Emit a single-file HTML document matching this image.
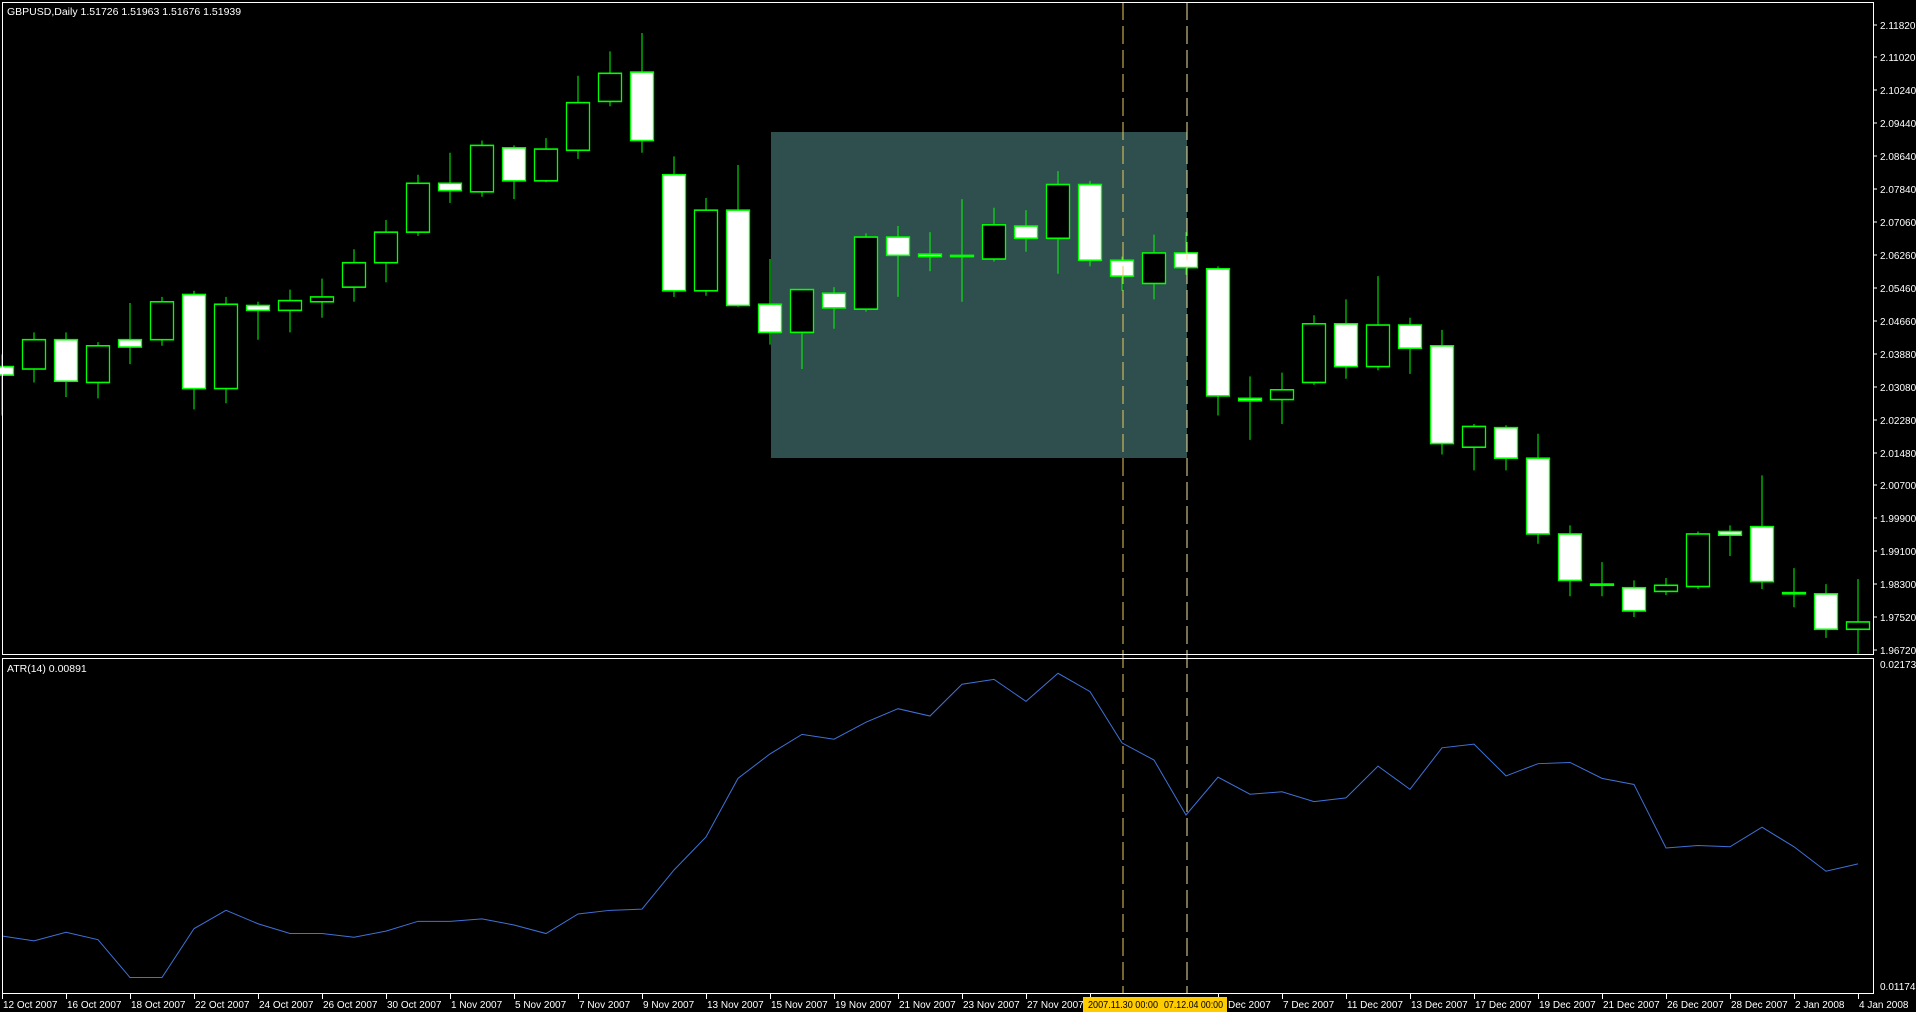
<!DOCTYPE html>
<html><head><meta charset="utf-8"><style>
html,body{margin:0;padding:0;background:#000;width:1916px;height:1012px;overflow:hidden}
svg{display:block}
text{font-family:"Liberation Sans",sans-serif;font-size:10.5px;fill:#fff}
.p text{font-size:10px}
.w{stroke:#00ff00;stroke-width:1;vector-effect:non-scaling-stroke}
.b{stroke:#00ff00;stroke-width:1.3;vector-effect:non-scaling-stroke}
</style></head><body>
<svg width="1916" height="1012" viewBox="0 0 1916 1012">
<rect width="1916" height="1012" fill="#000"/>
<rect x="771" y="132" width="416" height="326" fill="#2f4f4f"/>
<g transform="scale(1,1.2219)">
<g class="w">
<line x1="2" x2="2" y1="290" y2="340"/><line x1="34" x2="34" y1="272" y2="313"/><line x1="66" x2="66" y1="272" y2="325"/><line x1="98" x2="98" y1="280" y2="326"/><line x1="130" x2="130" y1="248" y2="298"/><line x1="162" x2="162" y1="243" y2="283"/><line x1="194" x2="194" y1="238" y2="335"/><line x1="226" x2="226" y1="243" y2="330"/><line x1="258" x2="258" y1="247" y2="278"/><line x1="290" x2="290" y1="237" y2="272"/><line x1="322" x2="322" y1="228" y2="260"/><line x1="354" x2="354" y1="204" y2="247"/><line x1="386" x2="386" y1="180" y2="231"/><line x1="418" x2="418" y1="143" y2="193"/><line x1="450" x2="450" y1="125" y2="166"/><line x1="482" x2="482" y1="115" y2="161"/><line x1="514" x2="514" y1="119" y2="163"/><line x1="546" x2="546" y1="113" y2="149"/><line x1="578" x2="578" y1="62" y2="130"/><line x1="610" x2="610" y1="42" y2="87"/><line x1="642" x2="642" y1="27" y2="125"/><line x1="674" x2="674" y1="128" y2="243"/><line x1="706" x2="706" y1="162" y2="242"/><line x1="738" x2="738" y1="135" y2="251"/><line x1="770" x2="770" y1="212" y2="282"/><line x1="802" x2="802" y1="237" y2="302"/><line x1="834" x2="834" y1="235" y2="269"/><line x1="866" x2="866" y1="191" y2="255"/><line x1="898" x2="898" y1="185" y2="243"/><line x1="930" x2="930" y1="190" y2="222"/><line x1="962" x2="962" y1="163" y2="247"/><line x1="994" x2="994" y1="170" y2="214"/><line x1="1026" x2="1026" y1="172" y2="206"/><line x1="1058" x2="1058" y1="140" y2="224"/><line x1="1090" x2="1090" y1="148" y2="218"/><line x1="1122" x2="1122" y1="210" y2="238"/><line x1="1154" x2="1154" y1="192" y2="245"/><line x1="1186" x2="1186" y1="190" y2="225"/><line x1="1218" x2="1218" y1="218" y2="340"/><line x1="1250" x2="1250" y1="308" y2="360"/><line x1="1282" x2="1282" y1="305" y2="347"/><line x1="1314" x2="1314" y1="258" y2="315"/><line x1="1346" x2="1346" y1="245" y2="310"/><line x1="1378" x2="1378" y1="226" y2="303"/><line x1="1410" x2="1410" y1="260" y2="306"/><line x1="1442" x2="1442" y1="270" y2="372"/><line x1="1474" x2="1474" y1="347" y2="385"/><line x1="1506" x2="1506" y1="348" y2="385"/><line x1="1538" x2="1538" y1="355" y2="445"/><line x1="1570" x2="1570" y1="430" y2="488"/><line x1="1602" x2="1602" y1="460" y2="488"/><line x1="1634" x2="1634" y1="475" y2="505"/><line x1="1666" x2="1666" y1="473" y2="487"/><line x1="1698" x2="1698" y1="435" y2="482"/><line x1="1730" x2="1730" y1="430" y2="455"/><line x1="1762" x2="1762" y1="389" y2="482"/><line x1="1794" x2="1794" y1="465" y2="497"/><line x1="1826" x2="1826" y1="478" y2="522"/><line x1="1858" x2="1858" y1="474" y2="535"/>
</g>
<g class="b">
<rect x="-9.5" y="300" width="23" height="7" fill="#fff"/>
<rect x="22.5" y="278" width="23" height="24" fill="#000"/>
<rect x="54.5" y="278" width="23" height="34" fill="#fff"/>
<rect x="86.5" y="283" width="23" height="30" fill="#000"/>
<rect x="118.5" y="278" width="23" height="6" fill="#fff"/>
<rect x="150.5" y="247" width="23" height="31" fill="#000"/>
<rect x="182.5" y="241" width="23" height="77" fill="#fff"/>
<rect x="214.5" y="249" width="23" height="69" fill="#000"/>
<rect x="246.5" y="250" width="23" height="4" fill="#fff"/>
<rect x="278.5" y="246" width="23" height="8" fill="#000"/>
<rect x="310.5" y="243" width="23" height="4" fill="#000"/>
<rect x="342.5" y="215" width="23" height="20" fill="#000"/>
<rect x="374.5" y="190" width="23" height="25" fill="#000"/>
<rect x="406.5" y="150" width="23" height="40" fill="#000"/>
<rect x="438.5" y="150" width="23" height="6" fill="#fff"/>
<rect x="470.5" y="119" width="23" height="38" fill="#000"/>
<rect x="502.5" y="121" width="23" height="27" fill="#fff"/>
<rect x="534.5" y="122" width="23" height="26" fill="#000"/>
<rect x="566.5" y="84" width="23" height="39" fill="#000"/>
<rect x="598.5" y="60" width="23" height="23" fill="#000"/>
<rect x="630.5" y="59" width="23" height="56" fill="#fff"/>
<rect x="662.5" y="143" width="23" height="95" fill="#fff"/>
<rect x="694.5" y="172" width="23" height="66" fill="#000"/>
<rect x="726.5" y="172" width="23" height="78" fill="#fff"/>
<rect x="758.5" y="249" width="23" height="23" fill="#fff"/>
<rect x="790.5" y="237" width="23" height="35" fill="#000"/>
<rect x="822.5" y="240" width="23" height="12" fill="#fff"/>
<rect x="854.5" y="194" width="23" height="59" fill="#000"/>
<rect x="886.5" y="194" width="23" height="15" fill="#fff"/>
<rect x="918.5" y="208" width="23" height="2" fill="#fff"/>
<rect x="950.5" y="209" width="23" height="1" fill="#fff"/>
<rect x="982.5" y="184" width="23" height="28" fill="#000"/>
<rect x="1014.5" y="185" width="23" height="10" fill="#fff"/>
<rect x="1046.5" y="151" width="23" height="44" fill="#000"/>
<rect x="1078.5" y="151" width="23" height="62" fill="#fff"/>
<rect x="1110.5" y="213" width="23" height="13" fill="#fff"/>
<rect x="1142.5" y="207" width="23" height="25" fill="#000"/>
<rect x="1174.5" y="207" width="23" height="12" fill="#fff"/>
<rect x="1206.5" y="220" width="23" height="104" fill="#fff"/>
<rect x="1238.5" y="326" width="23" height="2" fill="#fff"/>
<rect x="1270.5" y="319" width="23" height="8" fill="#000"/>
<rect x="1302.5" y="265" width="23" height="48" fill="#000"/>
<rect x="1334.5" y="265" width="23" height="35" fill="#fff"/>
<rect x="1366.5" y="266" width="23" height="34" fill="#000"/>
<rect x="1398.5" y="266" width="23" height="19" fill="#fff"/>
<rect x="1430.5" y="283" width="23" height="80" fill="#fff"/>
<rect x="1462.5" y="349" width="23" height="17" fill="#000"/>
<rect x="1494.5" y="350" width="23" height="25" fill="#fff"/>
<rect x="1526.5" y="375" width="23" height="62" fill="#fff"/>
<rect x="1558.5" y="437" width="23" height="38" fill="#fff"/>
<rect x="1590.5" y="478" width="23" height="1" fill="#fff"/>
<rect x="1622.5" y="481" width="23" height="19" fill="#fff"/>
<rect x="1654.5" y="479" width="23" height="5" fill="#000"/>
<rect x="1686.5" y="437" width="23" height="43" fill="#000"/>
<rect x="1718.5" y="435" width="23" height="3" fill="#fff"/>
<rect x="1750.5" y="431" width="23" height="45" fill="#fff"/>
<rect x="1782.5" y="485" width="23" height="1" fill="#fff"/>
<rect x="1814.5" y="486" width="23" height="29" fill="#fff"/>
<rect x="1846.5" y="509" width="23" height="6" fill="#000"/>
</g>
<polyline fill="none" stroke="#3f72d8" stroke-width="1" vector-effect="non-scaling-stroke" points="2,766 34,770 66,763 98,769 130,800 162,800 194,760 226,745 258,756 290,764 322,764 354,767 386,762 418,754 450,754 482,752 514,757 546,764 578,748 610,745 642,744 674,712 706,685 738,637 770,617 802,601 834,605 866,591 898,580 930,586 962,560 994,556 1026,574 1058,551 1090,566 1122,608 1154,622 1186,667 1218,636 1250,650 1282,648 1314,656 1346,653 1378,627 1410,646 1442,612 1474,609 1506,635 1538,625 1570,624 1602,637 1634,642 1666,694 1698,692 1730,693 1762,677 1794,693 1826,713 1858,707"/>
</g>
<line x1="1123" x2="1123" y1="2" y2="994" stroke="#e8c860" stroke-width="1" stroke-dasharray="18,6"/>
<line x1="1187" x2="1187" y1="2" y2="994" stroke="#f0e0a0" stroke-width="1" stroke-dasharray="18,6"/>
<g fill="none" stroke="#fff" stroke-width="1">
<rect x="2.5" y="2.5" width="1871" height="652"/>
<rect x="2.5" y="658.5" width="1871" height="335"/>
</g>
<text x="7" y="15">GBPUSD,Daily  1.51726 1.51963 1.51676 1.51939</text>
<text x="7" y="672">ATR(14) 0.00891</text>
<g class="p">
<text x="1880" y="29">2.11820</text><text x="1880" y="61">2.11020</text><text x="1880" y="94">2.10240</text><text x="1880" y="127">2.09440</text><text x="1880" y="160">2.08640</text><text x="1880" y="193">2.07840</text><text x="1880" y="226">2.07060</text><text x="1880" y="259">2.06260</text><text x="1880" y="292">2.05460</text><text x="1880" y="325">2.04660</text><text x="1880" y="358">2.03880</text><text x="1880" y="391">2.03080</text><text x="1880" y="424">2.02280</text><text x="1880" y="457">2.01480</text><text x="1880" y="489">2.00700</text><text x="1880" y="522">1.99900</text><text x="1880" y="555">1.99100</text><text x="1880" y="588">1.98300</text><text x="1880" y="621">1.97520</text><text x="1880" y="654">1.96720</text>
<text x="1880" y="668">0.02173</text><text x="1880" y="990">0.01174</text>
</g>
<g stroke="#fff"><line x1="1874" x2="1877" y1="25" y2="25"/><line x1="1874" x2="1877" y1="57" y2="57"/><line x1="1874" x2="1877" y1="90" y2="90"/><line x1="1874" x2="1877" y1="123" y2="123"/><line x1="1874" x2="1877" y1="156" y2="156"/><line x1="1874" x2="1877" y1="189" y2="189"/><line x1="1874" x2="1877" y1="222" y2="222"/><line x1="1874" x2="1877" y1="255" y2="255"/><line x1="1874" x2="1877" y1="288" y2="288"/><line x1="1874" x2="1877" y1="321" y2="321"/><line x1="1874" x2="1877" y1="354" y2="354"/><line x1="1874" x2="1877" y1="387" y2="387"/><line x1="1874" x2="1877" y1="420" y2="420"/><line x1="1874" x2="1877" y1="453" y2="453"/><line x1="1874" x2="1877" y1="485" y2="485"/><line x1="1874" x2="1877" y1="518" y2="518"/><line x1="1874" x2="1877" y1="551" y2="551"/><line x1="1874" x2="1877" y1="584" y2="584"/><line x1="1874" x2="1877" y1="617" y2="617"/><line x1="1874" x2="1877" y1="650" y2="650"/></g>
<g stroke="#fff">
<line x1="2.5" x2="2.5" y1="994" y2="999"/><line x1="66.5" x2="66.5" y1="994" y2="999"/><line x1="130.5" x2="130.5" y1="994" y2="999"/><line x1="194.5" x2="194.5" y1="994" y2="999"/><line x1="258.5" x2="258.5" y1="994" y2="999"/><line x1="322.5" x2="322.5" y1="994" y2="999"/><line x1="386.5" x2="386.5" y1="994" y2="999"/><line x1="450.5" x2="450.5" y1="994" y2="999"/><line x1="514.5" x2="514.5" y1="994" y2="999"/><line x1="578.5" x2="578.5" y1="994" y2="999"/><line x1="642.5" x2="642.5" y1="994" y2="999"/><line x1="706.5" x2="706.5" y1="994" y2="999"/><line x1="770.5" x2="770.5" y1="994" y2="999"/><line x1="834.5" x2="834.5" y1="994" y2="999"/><line x1="898.5" x2="898.5" y1="994" y2="999"/><line x1="962.5" x2="962.5" y1="994" y2="999"/><line x1="1026.5" x2="1026.5" y1="994" y2="999"/><line x1="1090.5" x2="1090.5" y1="994" y2="999"/><line x1="1218.5" x2="1218.5" y1="994" y2="999"/><line x1="1282.5" x2="1282.5" y1="994" y2="999"/><line x1="1346.5" x2="1346.5" y1="994" y2="999"/><line x1="1410.5" x2="1410.5" y1="994" y2="999"/><line x1="1474.5" x2="1474.5" y1="994" y2="999"/><line x1="1538.5" x2="1538.5" y1="994" y2="999"/><line x1="1602.5" x2="1602.5" y1="994" y2="999"/><line x1="1666.5" x2="1666.5" y1="994" y2="999"/><line x1="1730.5" x2="1730.5" y1="994" y2="999"/><line x1="1794.5" x2="1794.5" y1="994" y2="999"/><line x1="1858.5" x2="1858.5" y1="994" y2="999"/>
</g>
<g class="p">
<text x="3" y="1008">12 Oct 2007</text><text x="67" y="1008">16 Oct 2007</text><text x="131" y="1008">18 Oct 2007</text><text x="195" y="1008">22 Oct 2007</text><text x="259" y="1008">24 Oct 2007</text><text x="323" y="1008">26 Oct 2007</text><text x="387" y="1008">30 Oct 2007</text><text x="451" y="1008">1 Nov 2007</text><text x="515" y="1008">5 Nov 2007</text><text x="579" y="1008">7 Nov 2007</text><text x="643" y="1008">9 Nov 2007</text><text x="707" y="1008">13 Nov 2007</text><text x="771" y="1008">15 Nov 2007</text><text x="835" y="1008">19 Nov 2007</text><text x="899" y="1008">21 Nov 2007</text><text x="963" y="1008">23 Nov 2007</text><text x="1027" y="1008">27 Nov 2007</text><text x="1228" y="1008">Dec 2007</text><text x="1283" y="1008">7 Dec 2007</text><text x="1347" y="1008">11 Dec 2007</text><text x="1411" y="1008">13 Dec 2007</text><text x="1475" y="1008">17 Dec 2007</text><text x="1539" y="1008">19 Dec 2007</text><text x="1603" y="1008">21 Dec 2007</text><text x="1667" y="1008">26 Dec 2007</text><text x="1731" y="1008">28 Dec 2007</text><text x="1795" y="1008">2 Jan 2008</text><text x="1859" y="1008">4 Jan 2008</text>
</g>
<rect x="1083" y="997" width="144" height="15" fill="#ffcc00"/>
<text x="1088" y="1008" style="fill:#000;font-size:10px" textLength="70" lengthAdjust="spacingAndGlyphs">2007.11.30 00:00</text>
<text x="1164" y="1008" style="fill:#000;font-size:10px" textLength="59" lengthAdjust="spacingAndGlyphs">07.12.04 00:00</text>
</svg>
</body></html>
